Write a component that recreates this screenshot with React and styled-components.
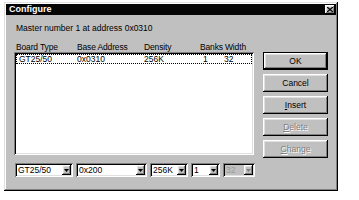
import styled, { createGlobalStyle } from "styled-components";

const Global = createGlobalStyle`
  html, body {
    margin: 0;
    padding: 0;
    background: #ffffff;
  }
  body {
    font-family: "Liberation Sans", Arial, sans-serif;
    font-size: 8.5px;
    color: #000;
  }
`;

const raised = `
  box-shadow: inset -1px -1px #000, inset 1px 1px #fff,
    inset -2px -2px #808080, inset 2px 2px #dfdfdf;
`;

const sunken = `
  box-shadow: inset 1px 1px #808080, inset -1px -1px #fff,
    inset 2px 2px #000, inset -2px -2px #dfdfdf;
`;

const Arrow = ({ disabled }) => (
  <svg width="5" height="3" viewBox="0 0 5 3">
    <path d="M0 0h5L2.5 3z" fill={disabled ? "#808080" : "#000"} />
  </svg>
);

const Combo = ({ value, w, disabled }) => (
  <ComboBox $w={w} $disabled={disabled}>
    <ComboText $disabled={disabled}>{value}</ComboText>
    <ComboBtn>
      <Arrow disabled={disabled} />
    </ComboBtn>
  </ComboBox>
);

const App = () => {
  return (
    <>
      <Global />
      <Window>
        <TitleBar>
          <Title>Configure</Title>
          <CloseBtn>
            <svg width="6" height="5" viewBox="0 0 6 5">
              <path d="M0 0L6 5M6 0L0 5" stroke="#000" strokeWidth="1.3" />
            </svg>
          </CloseBtn>
        </TitleBar>
        <Body>
          <Info>Master number 1 at address 0x0310</Info>
          <Main>
            <Left>
              <Headers>
                <span>Board Type</span>
                <span>Base Address</span>
                <span>Density</span>
                <span>Banks</span>
                <span>Width</span>
              </Headers>
              <List>
                <Row>
                  <span>GT25/50</span>
                  <span>0x0310</span>
                  <span>256K</span>
                  <span>1</span>
                  <span>32</span>
                </Row>
              </List>
              <Combos>
                <Combo value="GT25/50" w={58} />
                <Combo value="0x200" w={71} />
                <Combo value="256K" w={38} />
                <Combo value="1" w={29} />
                <Combo value="32" w={32} disabled />
              </Combos>
            </Left>
            <Buttons>
              <Button $default>OK</Button>
              <Button>Cancel</Button>
              <Button>
                <u>I</u>nsert
              </Button>
              <Button $disabled>
                <u>D</u>elete
              </Button>
              <Button $disabled>
                <u>C</u>hange
              </Button>
            </Buttons>
          </Main>
        </Body>
      </Window>
    </>
  );
};

export default App;

const Window = styled.div`
  margin: 2px 0 0 4px;
  width: 334px;
  height: 189px;
  box-sizing: border-box;
  padding: 2px;
  background: #c0c0c0;
  box-shadow: inset -1px -1px #000, inset 1px 1px #dfdfdf,
    inset -2px -2px #808080, inset 2px 2px #fff;
  display: flex;
  flex-direction: column;
`;

const TitleBar = styled.div`
  height: 11px;
  background: #060606;
  display: flex;
  align-items: center;
  justify-content: space-between;
  padding: 0 1px 0 3px;
`;

const Title = styled.span`
  color: #fff;
  font-weight: bold;
  font-size: 9px;
  line-height: 11px;
`;

const CloseBtn = styled.div`
  width: 10px;
  height: 9px;
  background: #c0c0c0;
  ${raised}
  display: flex;
  align-items: center;
  justify-content: center;
`;

const Body = styled.div`
  padding: 8px 0 0 8px;
  display: flex;
  flex-direction: column;
`;

const Info = styled.div`
  line-height: 10px;
  height: 10px;
  padding-left: 2px;
  white-space: nowrap;
`;

const Main = styled.div`
  margin-top: 10px;
  display: flex;
  gap: 8px;
`;

const Left = styled.div`
  display: flex;
  flex-direction: column;
  width: 241px;
`;

const Headers = styled.div`
  display: grid;
  grid-template-columns: 61px 67px 56px 25px 1fr;
  height: 9px;
  line-height: 9px;
  padding-left: 2px;
  letter-spacing: -0.15px;
  white-space: nowrap;
`;

const List = styled.div`
  width: 240px;
  height: 103px;
  box-sizing: border-box;
  padding: 2px;
  background: #fff;
  ${sunken}
`;

const Row = styled.div`
  display: grid;
  grid-template-columns: 58px 67px 59px 21px 1fr;
  height: 10px;
  line-height: 10px;
  box-sizing: border-box;
  padding-left: 3px;
  outline: 1px dotted #000;
  outline-offset: -1px;
  white-space: nowrap;
`;

const Combos = styled.div`
  margin-top: 8px;
  display: flex;
  gap: 3px;
  margin-left: 1px;
`;

const ComboBox = styled.div`
  width: ${(p) => p.$w}px;
  height: 14px;
  box-sizing: border-box;
  padding: 2px;
  background: ${(p) => (p.$disabled ? "#c0c0c0" : "#fff")};
  ${sunken}
  display: flex;
  align-items: stretch;
`;

const ComboText = styled.span`
  flex: 1;
  padding-left: 1px;
  line-height: 10px;
  white-space: nowrap;
  overflow: hidden;
  color: ${(p) => (p.$disabled ? "#9a9a9a" : "#000")};
`;

const ComboBtn = styled.div`
  width: 9px;
  background: #c0c0c0;
  ${raised}
  display: flex;
  align-items: center;
  justify-content: center;
`;

const Buttons = styled.div`
  margin-top: 9px;
  display: flex;
  flex-direction: column;
  gap: 4px;
`;

const Button = styled.div`
  width: 65px;
  height: 18px;
  box-sizing: border-box;
  background: #c0c0c0;
  display: flex;
  align-items: center;
  justify-content: center;
  line-height: 10px;
  ${(p) =>
    p.$default
      ? `box-shadow: inset 0 0 0 1px #000, inset -2px -2px #000, inset 2px 2px #fff,
    inset -3px -3px #808080, inset 3px 3px #dfdfdf;`
      : raised}
  color: ${(p) => (p.$disabled ? "#808080" : "#000")};
  text-shadow: ${(p) => (p.$disabled ? "1px 1px #fff" : "none")};
`;
